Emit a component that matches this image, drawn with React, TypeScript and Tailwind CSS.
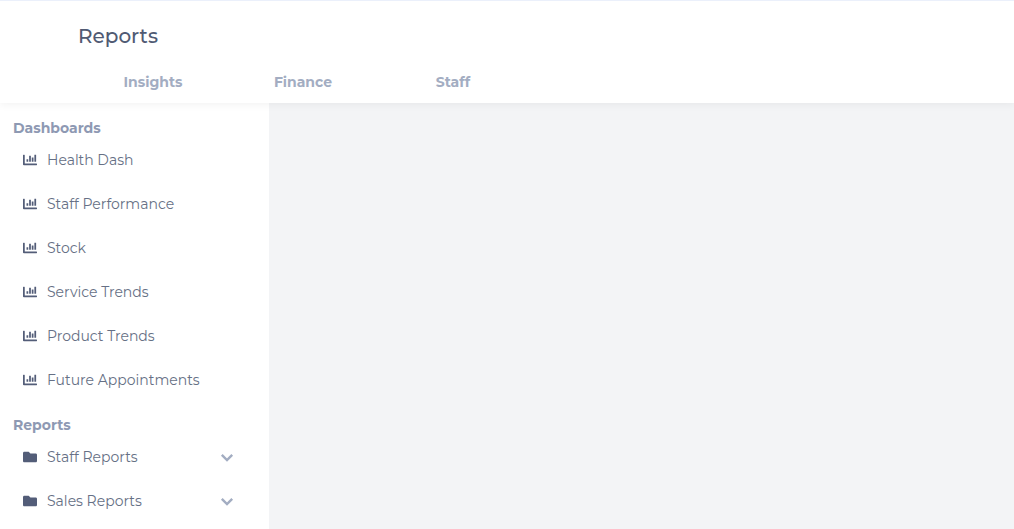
import { FaChartBar, FaFolder } from "react-icons/fa";

const tabs = ["Insights", "Finance", "Staff"];

const dashboards = [
  "Health Dash",
  "Staff Performance",
  "Stock",
  "Service Trends",
  "Product Trends",
  "Future Appointments",
];

const reportFolders = ["Staff Reports", "Sales Reports"];

const Chevron = () => {
  return (
    <svg
      viewBox="0 0 24 24"
      className="size-6 shrink-0 text-[#a3adc2]"
      fill="none"
      stroke="currentColor"
      strokeWidth="2.4"
      aria-hidden="true"
    >
      <path d="M6.8 9.8 12 15l5.2-5.2" />
    </svg>
  );
};

const Header = () => {
  return (
    <header className="relative z-10 border-t border-[#ebf0fb] bg-white pl-[78px] shadow-[0_2px_8px_rgba(0,0,0,0.05)]">
      <h1 className="pt-5 text-xl leading-[30px] font-medium text-[#505a73]">
        Reports
      </h1>
      <nav className="flex pt-[15px] pb-[5px]">
        {tabs.map((tab) => (
          <a
            key={tab}
            href="#"
            className="w-[150px] py-1.5 text-center text-sm leading-5 font-bold text-[#a3adc2]"
          >
            {tab}
          </a>
        ))}
      </nav>
    </header>
  );
};

const Sidebar = () => {
  return (
    <aside className="w-[269px] shrink-0 bg-white pt-[15px]">
      <h2 className="pl-[13px] text-sm leading-5 font-bold text-[#8e99b3]">
        Dashboards
      </h2>
      <ul>
        {dashboards.map((name) => (
          <li key={name}>
            <a
              href="#"
              className="flex h-11 items-center gap-2.5 pl-[23px] text-sm text-[#667085]"
            >
              <FaChartBar className="size-3.5 shrink-0 text-[#535d78]" />
              {name}
            </a>
          </li>
        ))}
      </ul>

      <h2 className="mt-[13px] pl-[13px] text-sm leading-5 font-bold text-[#8e99b3]">
        Reports
      </h2>
      <ul>
        {reportFolders.map((name) => (
          <li key={name}>
            <button
              type="button"
              className="flex h-11 w-full items-center gap-2.5 pr-[30px] pl-[23px] text-left text-sm text-[#667085]"
            >
              <FaFolder className="size-3.5 shrink-0 text-[#535d78]" />
              <span className="grow">{name}</span>
              <Chevron />
            </button>
          </li>
        ))}
      </ul>
    </aside>
  );
};

export default function App() {
  return (
    <div className="flex h-screen flex-col overflow-hidden bg-[#f3f4f6] font-[Montserrat,Inter,sans-serif]">
      <Header />
      <div className="flex min-h-0 grow">
        <Sidebar />
        <main className="grow bg-[#f3f4f6]" />
      </div>
    </div>
  );
}
